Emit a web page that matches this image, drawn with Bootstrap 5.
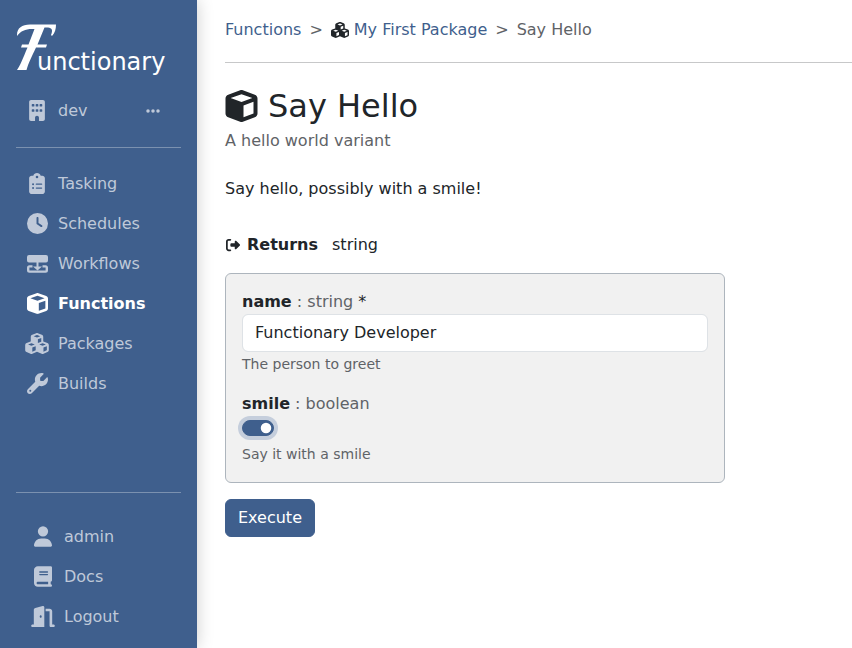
<!DOCTYPE html>
<html lang="en">
<head>
<meta charset="utf-8">
<meta name="viewport" content="width=device-width, initial-scale=1">
<title>Say Hello - Functionary</title>
<link href="https://cdn.jsdelivr.net/npm/bootstrap@5.3.0/dist/css/bootstrap.min.css" rel="stylesheet">
<style>
:root{--brand:#3f5f8d}
body{font-family:"DejaVu Sans",sans-serif;color:#212529}
svg{fill:currentColor;flex:none}
.sidebar{width:197px;background:var(--brand);box-shadow:0 0 16px rgba(0,0,0,.2)}
.brand-link{font-size:24px;line-height:36px;color:#fff;padding-top:24px;margin-bottom:11px}
.brand-link svg{margin-right:-20px}
.sidebar hr{color:#b8c3d3;opacity:.5}
.side-link{color:#bfc9d9;line-height:24px;padding:8px 0}
.side-link.active{color:#fff;font-weight:700}
.side-icon{width:26px;display:flex;justify-content:center;margin:0 8px 1px 0}
.user-links{padding-bottom:11px}
.user-links .side-icon{width:22px;margin-right:10px}
a.crumb{color:var(--brand);text-decoration:none}
.crumb-bar{padding-top:18px}
.crumb-bar svg{margin-right:5px}
.muted-text{color:#5f6367}
.main-rule{color:#212529;opacity:.25;margin:20px 0 24px}
.page-title{font-size:32px;line-height:38px;font-weight:400;gap:10px}
.returns-row svg{margin-right:6px}
.returns-row span{margin-left:14px}
.param-box{max-width:500px;background:#f1f1f1;border:1px solid #adb5bd;border-radius:6px}
.hint{font-size:14px;line-height:20px;padding-bottom:2px}
.form-control + .hint{margin-top:2px}
.param-box .form-switch .form-check-input{width:32px;height:16px}
.param-box .form-check-input:checked{background-color:var(--brand);border-color:var(--brand)}
.param-box .form-switch .form-check-input:checked{box-shadow:0 0 0 4px #c5cedc}
.btn-brand{--bs-btn-bg:var(--brand);--bs-btn-color:#fff;--bs-btn-border-color:var(--brand);--bs-btn-hover-bg:#35517a;--bs-btn-hover-color:#fff}
</style>
</head>
<body>
<svg class="d-none" aria-hidden="true">
<symbol id="cube" viewBox="0 0 512 512"><path d="M234.500 5.700c13.900-5 29.100-5 43.100 0l192 68.600C495 83.400 512 107.500 512 134.600V377.400c0 27-17 51.200-42.500 60.300l-192 68.600c-13.900 5-29.100 5-43.100 0l-192-68.600C17 428.600 0 404.500 0 377.400V134.600c0-27 17-51.200 42.500-60.300l192-68.600zM256 66L82.300 128 256 190l173.700-62L256 66zm32 368.600l160-57.100v-188L288 246.600v188z"/></symbol>
<symbol id="cubes" viewBox="0 0 576 512"><path d="M290.800 48.600l78.400 29.700L288 109.500 206.800 78.300l78.400-29.700c1.800-.7 3.800-.7 5.700 0zM136 92.500V204.700c-1.300 .4-2.600 .8-3.900 1.300l-96 36.400C14.400 250.600 0 271.500 0 294.700V413.900c0 22.200 13.100 42.300 33.500 51.300l96 42.200c14.400 6.300 30.700 6.300 45.100 0L288 457.500l113.500 49.900c14.400 6.300 30.700 6.300 45.100 0l96-42.200c20.300-8.900 33.500-29.100 33.500-51.300V294.700c0-23.300-14.400-44.100-36.100-52.400l-96-36.400c-1.300-.5-2.600-.9-3.900-1.300V92.500c0-23.300-14.400-44.100-36.100-52.400l-96-36.400c-12.800-4.800-26.900-4.800-39.700 0l-96 36.400C150.400 48.400 136 69.300 136 92.500zM392 210.600l-82.400 31.200V152.600L392 121v89.600zM154.800 250.900l78.400 29.700L152 311.700 70.800 280.600l78.400-29.700c1.800-.7 3.800-.7 5.700 0zm18.800 204.400V354.800L256 323.200v95.900l-82.400 36.200zM421.200 250.900c1.800-.7 3.800-.7 5.700 0l78.400 29.700L424 311.700l-81.200-31.100 78.400-29.700zM523.200 421.200l-77.600 34.100V354.800L528 323.200v90.700c0 3.200-1.900 6-4.800 7.300z"/></symbol>
</svg>
<div class="d-flex min-vh-100">
<nav class="sidebar d-flex flex-column flex-shrink-0 px-3" aria-label="Main">
  <a class="brand-link text-decoration-none d-flex align-items-baseline" href="#" aria-label="Functionary"><svg width="41" height="46" viewBox="0 0 41 46" aria-hidden="true"><path d="M1 11C1 4 6 .5 14 .5H40C40 5 39 9 36 12L35 11C37 6 36 4 32 3.500H28.500L21.500 20.500H31L30 23.500H20C15.500 33 12.500 39 10.500 46H1C4 42 7 34 11.500 23.500H5L6 20.500H12.500L18.500 5H16C9 5 5 7 1 12Z"/></svg>unctionary</a>
  <div class="d-flex align-items-center side-link ps-2 pe-3">
    <span class="side-icon"><svg width="16" height="21" viewBox="0 0 384 512"><path d="M48 0C21.500 0 0 21.500 0 48V464c0 26.500 21.500 48 48 48h96V432c0-26.500 21.500-48 48-48s48 21.500 48 48v80h96c26.500 0 48-21.500 48-48V48c0-26.500-21.500-48-48-48H48zM64 240c0-8.800 7.200-16 16-16h32c8.800 0 16 7.200 16 16v32c0 8.800-7.200 16-16 16H80c-8.800 0-16-7.200-16-16V240zm112-16h32c8.800 0 16 7.200 16 16v32c0 8.800-7.200 16-16 16H176c-8.800 0-16-7.200-16-16V240c0-8.800 7.200-16 16-16zm80 16c0-8.800 7.200-16 16-16h32c8.800 0 16 7.200 16 16v32c0 8.800-7.200 16-16 16H272c-8.800 0-16-7.200-16-16V240zM80 96h32c8.800 0 16 7.200 16 16v32c0 8.800-7.200 16-16 16H80c-8.800 0-16-7.200-16-16V112c0-8.800 7.200-16 16-16zm80 16c0-8.800 7.200-16 16-16h32c8.800 0 16 7.200 16 16v32c0 8.800-7.200 16-16 16H176c-8.800 0-16-7.200-16-16V112zM272 96h32c8.800 0 16 7.200 16 16v32c0 8.800-7.200 16-16 16H272c-8.800 0-16-7.200-16-16V112c0-8.800 7.200-16 16-16z"/></svg></span>
    <span>dev</span>
    <button type="button" class="btn p-0 border-0 ms-auto me-1 lh-1 text-reset" aria-label="Environments"><svg width="16" height="16" viewBox="0 0 448 512"><path d="M8 256a56 56 0 1 1 112 0A56 56 0 1 1 8 256zm160 0a56 56 0 1 1 112 0 56 56 0 1 1-112 0zm216-56a56 56 0 1 1 0 112 56 56 0 1 1 0-112z"/></svg></button>
  </div>
  <hr class="my-3">
  <ul class="nav flex-column flex-nowrap mb-auto">
    <li><a href="#" class="side-link d-flex align-items-center text-decoration-none ps-2"><span class="side-icon"><svg width="16" height="21" viewBox="0 0 384 512"><path d="M192 0c-41.800 0-77.400 26.700-90.500 64H64C28.700 64 0 92.700 0 128V448c0 35.300 28.700 64 64 64H320c35.300 0 64-28.700 64-64V128c0-35.300-28.700-64-64-64H282.500C269.400 26.700 233.800 0 192 0zm0 64a32 32 0 1 1 0 64 32 32 0 1 1 0-64zM72 272a24 24 0 1 1 48 0 24 24 0 1 1-48 0zm104-16H304c8.800 0 16 7.200 16 16s-7.200 16-16 16H176c-8.800 0-16-7.200-16-16s7.200-16 16-16zM72 368a24 24 0 1 1 48 0 24 24 0 1 1-48 0zm88 0c0-8.800 7.200-16 16-16H304c8.800 0 16 7.200 16 16s-7.200 16-16 16H176c-8.800 0-16-7.200-16-16z"/></svg></span>Tasking</a></li>
    <li><a href="#" class="side-link d-flex align-items-center text-decoration-none ps-2"><span class="side-icon"><svg width="21" height="21" viewBox="0 0 512 512"><path d="M256 0a256 256 0 1 1 0 512A256 256 0 1 1 256 0zM232 120V256c0 8 4 15.500 10.700 20l96 64c11 7.400 25.900 4.400 33.300-6.700s4.400-25.900-6.700-33.300L280 243.200V120c0-13.300-10.700-24-24-24s-24 10.700-24 24z"/></svg></span>Schedules</a></li>
    <li><a href="#" class="side-link d-flex align-items-center text-decoration-none ps-2"><span class="side-icon"><svg width="21" height="18" viewBox="0 0 21 18"><path d="M2 0h17a2 2 0 0 1 2 2v3.500a2 2 0 0 1-2 2h-7.500V11.500H15l-4.500 4-4.500-4h3.500V7.500H2a2 2 0 0 1-2-2V2a2 2 0 0 1 2-2z"/><path d="M5.500 11.400H2.500a1.300 1.300 0 0 0-1.300 1.300v2.600a1.300 1.300 0 0 0 1.300 1.300h16a1.300 1.300 0 0 0 1.300-1.300v-2.600a1.300 1.300 0 0 0-1.300-1.300H15.500" fill="none" stroke="currentColor" stroke-width="2.400"/></svg></span>Workflows</a></li>
    <li><a href="#" class="side-link active d-flex align-items-center text-decoration-none ps-2" aria-current="page"><span class="side-icon"><svg width="21" height="21"><use href="#cube"/></svg></span>Functions</a></li>
    <li><a href="#" class="side-link d-flex align-items-center text-decoration-none ps-2"><span class="side-icon"><svg width="24" height="21"><use href="#cubes"/></svg></span>Packages</a></li>
    <li><a href="#" class="side-link d-flex align-items-center text-decoration-none ps-2"><span class="side-icon"><svg width="21" height="21" viewBox="0 0 512 512"><path d="M352 320c88.400 0 160-71.600 160-160c0-15.300-2.200-30.100-6.200-44.200c-3.100-10.800-16.400-13.200-24.300-5.300l-76.800 76.800c-3 3-7.100 4.700-11.300 4.700H336c-8.800 0-16-7.200-16-16V118.600c0-4.200 1.700-8.300 4.700-11.300l76.800-76.800c7.900-7.900 5.400-21.200-5.300-24.300C382.100 2.200 367.300 0 352 0C263.600 0 192 71.600 192 160c0 19.100 3.400 37.500 9.500 54.500L19.900 396.100C7.200 408.800 0 426.100 0 444.100C0 481.600 30.400 512 67.900 512c18 0 35.300-7.200 48-19.900L297.500 310.500c17 6.200 35.400 9.500 54.500 9.500zM80 408a24 24 0 1 1 0 48 24 24 0 1 1 0-48z"/></svg></span>Builds</a></li>
  </ul>
  <hr class="my-4">
  <ul class="user-links nav flex-column flex-nowrap">
    <li><a href="#" class="side-link d-flex align-items-center text-decoration-none ps-3"><span class="side-icon"><svg width="18" height="21" viewBox="0 0 448 512"><path d="M224 256A128 128 0 1 0 224 0a128 128 0 1 0 0 256zm-45.700 48C79.800 304 0 383.800 0 482.300C0 498.700 13.300 512 29.700 512H418.300c16.400 0 29.700-13.300 29.700-29.700C448 383.800 368.200 304 269.700 304H178.300z"/></svg></span>admin</a></li>
    <li><a href="#" class="side-link d-flex align-items-center text-decoration-none ps-3"><span class="side-icon"><svg width="18" height="21" viewBox="0 0 448 512"><path d="M96 0C43 0 0 43 0 96V416c0 53 43 96 96 96H384h32c17.700 0 32-14.300 32-32s-14.300-32-32-32V384c17.700 0 32-14.300 32-32V32c0-17.700-14.300-32-32-32H384 96zm0 384H352v64H96c-17.700 0-32-14.300-32-32s14.300-32 32-32zm32-240c0-8.800 7.200-16 16-16H336c8.800 0 16 7.200 16 16s-7.200 16-16 16H144c-8.800 0-16-7.200-16-16zm16 48H336c8.800 0 16 7.200 16 16s-7.200 16-16 16H144c-8.800 0-16-7.200-16-16s7.200-16 16-16z"/></svg></span>Docs</a></li>
    <li><a href="#" class="side-link d-flex align-items-center text-decoration-none ps-3"><span class="side-icon"><svg width="24" height="21" viewBox="0 0 576 512"><path d="M320 32c0-9.900-4.500-19.200-12.300-25.200S289.800-1.400 280.200 1l-179.900 45C79 51.300 64 70.500 64 92.500V448H32c-17.700 0-32 14.300-32 32s14.300 32 32 32H96 288h32V480 32zM256 256c0 17.700-10.700 32-24 32s-24-14.300-24-32s10.700-32 24-32s24 14.300 24 32zm96-128h96V480c0 17.700 14.300 32 32 32h64c17.700 0 32-14.300 32-32s-14.300-32-32-32H512V128c0-35.300-28.700-64-64-64H352v64z"/></svg></span>Logout</a></li>
  </ul>
</nav>
<main class="flex-grow-1 ps-4 ms-1">
  <nav aria-label="breadcrumb" class="crumb-bar">
    <ol class="breadcrumb mb-0">
      <li><a class="crumb" href="#">Functions</a></li>
      <li class="d-flex align-items-center"><span class="px-2 muted-text">&gt;</span><svg width="18" height="16"><use href="#cubes"/></svg><a class="crumb" href="#">My First Package</a></li>
      <li class="muted-text" aria-current="page"><span class="px-2">&gt;</span>Say Hello</li>
    </ol>
  </nav>
  <hr class="main-rule">
  <h1 class="page-title d-flex align-items-center mb-1"><svg width="33" height="32"><use href="#cube"/></svg>Say Hello</h1>
  <div class="muted-text mb-4">A hello world variant</div>
  <p class="mb-0">Say hello, possibly with a smile!</p>
  <div class="returns-row d-flex align-items-center mt-4 pt-2 mb-3"><svg width="16" height="14" viewBox="0 0 512 512"><path d="M377.900 105.900L500.700 228.700c7.200 7.200 11.300 17.100 11.300 27.300s-4.100 20.100-11.300 27.300L377.900 406.100c-6.400 6.400-15 9.900-24 9.900c-18.700 0-33.900-15.200-33.900-33.900l0-62.100-128 0c-17.700 0-32-14.300-32-32l0-64c0-17.700 14.300-32 32-32l128 0 0-62.100c0-18.700 15.200-33.900 33.900-33.900c9 0 17.600 3.600 24 9.900zM160 96L96 96c-17.700 0-32 14.300-32 32l0 256c0 17.700 14.300 32 32 32l64 0c17.700 0 32 14.300 32 32s-14.300 32-32 32l-64 0c-53 0-96-43-96-96L0 128C0 75 43 32 96 32l64 0c17.700 0 32 14.300 32 32s-14.300 32-32 32z"/></svg><strong>Returns</strong><span>string</span></div>
  <form>
    <div class="param-box p-3 mb-3">
      <label for="p-name"><strong>name</strong> <span class="muted-text">: string</span> *</label>
      <input id="p-name" class="form-control" type="text" value="Functionary Developer" aria-describedby="h-name">
      <div id="h-name" class="hint muted-text mb-3">The person to greet</div>
      <label for="p-smile"><strong>smile</strong> <span class="muted-text">: boolean</span></label>
      <div class="form-check form-switch mb-0"><input id="p-smile" class="form-check-input" type="checkbox" role="switch" checked aria-describedby="h-smile"></div>
      <div id="h-smile" class="hint muted-text mt-1">Say it with a smile</div>
    </div>
    <button class="btn btn-brand" type="button">Execute</button>
  </form>
</main>
</div>
<script src="https://cdn.jsdelivr.net/npm/bootstrap@5.3.0/dist/js/bootstrap.bundle.min.js"></script>
</body>
</html>
